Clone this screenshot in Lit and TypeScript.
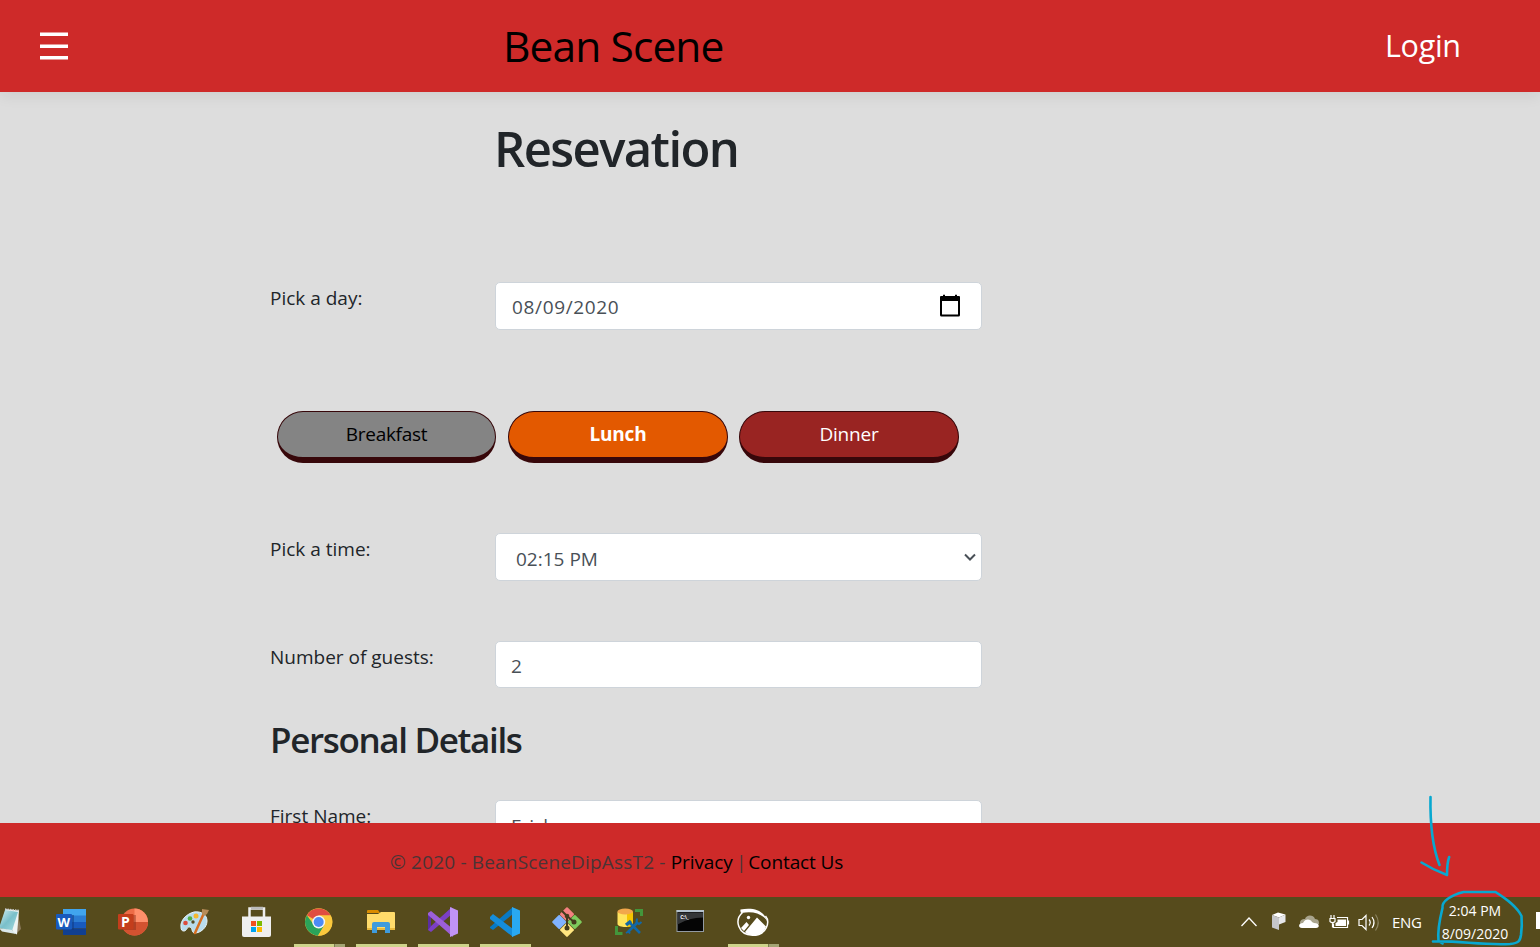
import { LitElement, html, css, svg } from 'lit';
import { customElement } from 'lit/decorators.js';

const glyphs = [
  // Notepad
  svg`<defs><linearGradient id="np" x1="0" y1="0" x2="1" y2="1"><stop offset="0" stop-color="#d8f0f2"/><stop offset=".5" stop-color="#79bfca"/><stop offset="1" stop-color="#a9dbe0"/></linearGradient></defs>
  <path d="M17 12l4 20-5 5z" fill="#8c7a5c"/><path d="M5 12l14 1.500-2 24-4-2z" fill="#edf3f3"/><path d="M5 13l13 2-6 19-13-3z" fill="url(#np)"/><path d="M-1 31l13 2 4 4-14-2.500z" fill="#dce9ea"/><path d="M5 12l14 1.500" stroke="#c7cccc" stroke-width="1.500" stroke-dasharray="1.500 1"/>`,
  // Word
  svg`<path d="M63 12h23v7H63z" fill="#41a5ee"/><path d="M63 18.500h23v6.500H63z" fill="#2b7cd3"/><path d="M63 25h23v6.500H63z" fill="#185abd"/><path d="M63 31.500h23V38H63z" fill="#103f91"/><rect x="62" y="18" width="12" height="15" fill="#10357c" opacity=".5"/><rect x="56" y="17" width="16" height="15.500" rx="1" fill="#185abd"/><text x="63.800" y="29.700" class="letter" font-size="13">W</text>`,
  // PowerPoint
  svg`<circle cx="134.500" cy="25" r="13.500" fill="#ed6c47"/><path d="M134.500 11.500a13.500 13.500 0 0 1 13.500 13.500h-13.500z" fill="#ff8f6b"/><path d="M121 25a13.500 13.500 0 0 0 27 0z" fill="#d35230"/><rect x="122" y="18" width="14" height="15" fill="#7c2817" opacity=".4"/><rect x="118" y="17" width="15.500" height="15.500" rx="1" fill="#c43e1c"/><text x="125.300" y="29.700" class="letter" font-size="14">P</text>`,
  // Paint
  svg`<path d="M181 30c-1-6 5-13 13-15 8-1 13 3 13 9 0 7-7 12-12 12-4 0-2-5-5-6s-3 4-6 4c-2 0-3-1-3-4z" fill="#b8dced" stroke="#e9f6fa"/><circle cx="193" cy="25" r="1.700" fill="#554c22"/><circle cx="185.500" cy="26" r="2.300" fill="#dc4d3d"/><circle cx="190" cy="21.500" r="2.300" fill="#51ae44"/><circle cx="196" cy="19" r="2.500" fill="#f5b82e"/><path d="M204 16l-9 20" stroke="#d76e20" stroke-width="2.500" stroke-linecap="round"/><path d="M202 12l7 1-2 4-3 2-2-2z" fill="#b78c57"/>`,
  // Store
  svg`<path d="M249.500 20v-8.500h14.500V20" fill="none" stroke="#eee" stroke-width="2.500"/><path d="M251 11h12" stroke="#bbb" stroke-width="2.500"/><path d="M242 19.500h29V38q0 2-2 2h-25q-2 0-2-2z" fill="#efefef"/><path d="M251 24h5v5h-5z" fill="#f25022"/><path d="M257 24h5v5h-5z" fill="#7fba00"/><path d="M251 30h5v5h-5z" fill="#00a4ef"/><path d="M257 30h5v5h-5z" fill="#ffb900"/>`,
  // Chrome
  svg`<circle cx="318.700" cy="25" r="13.700" fill="#fbc93d"/><path d="M318.700 25L306.800 18.200A13.700 13.700 0 0 1 330.600 18.500H318.700z" fill="#e04e41"/><path d="M306.800 18.200A13.700 13.700 0 0 0 318 38.700L324.500 28l-5.800-3-6.200 1z" fill="#2ba35a"/><path d="M318.700 18.500h11.900A13.700 13.700 0 0 1 318 38.700L324.500 28z" fill="#fbc93d"/><circle cx="318.700" cy="25" r="6.500" fill="#f4f4f4"/><circle cx="318.700" cy="25" r="5" fill="#4c8bf5"/>`,
  // Explorer
  svg`<path d="M367 14q0-1 1-1h10l2 3h-13z" fill="#d98c00"/><path d="M367 17h11l3-2h13q1 0 1 1v17H367z" fill="#ffdc6b"/><path d="M367 31h28v2h-28z" fill="#e9b93c"/><path d="M372 36V27q0-2 2-2h14q2 0 2 2v9h-5v-6h-8v6z" fill="#3f9bdc"/>`,
  // Visual Studio
  svg`<path d="M428 16l3-1v19l-3-1z" fill="#5b2da0"/><path d="M428 33l3 2 21-18v-7L431 29l-3 4z" fill="#7b3fc4"/><path d="M428 16l3-2 22 18v8L428 18z" fill="#9c5fd8"/><path d="M450 10l8 3.500v23l-8 3.500z" fill="#c193f5"/>`,
  // VS Code
  svg`<path d="M490 30v1l3 2 20-16v-7z" fill="#0879c4"/><path d="M490 20l3-3 20 15v8L490 22z" fill="#158ddb"/><path d="M512 10l8 3.500v23l-8 3.500z" fill="#29a9f2"/>`,
  // Git
  svg`<g transform="rotate(45 567 25)"><rect x="556.300" y="14.300" width="10.500" height="10.500" rx="1" fill="#f48080"/><rect x="567.300" y="14.300" width="10.500" height="10.500" rx="1" fill="#7ecb5d"/><rect x="556.300" y="25.300" width="10.500" height="10.500" rx="1" fill="#80b3ff"/><rect x="567.300" y="25.300" width="10.500" height="10.500" rx="1" fill="#ffe680"/></g><path d="M562 14l5 5v12M567 19l7 6" stroke="#443c1c" stroke-width="2" fill="none"/><circle cx="567" cy="19" r="2.300" fill="#443c1c"/><circle cx="567" cy="31" r="2.500" fill="#443c1c"/><circle cx="574" cy="25" r="2.500" fill="#443c1c"/>`,
  // Database tool
  svg`<path d="M617.500 15v12c0 4 15.500 4 15.500 0V15z" fill="#ffe45c"/><path d="M627 15v15c4-.5 6-1.500 6-3V15z" fill="#f5c400"/><ellipse cx="625.200" cy="14.500" rx="7.800" ry="3" fill="#f2a74b"/><path d="M635 13.500h6.500V19" fill="none" stroke="#43963b" stroke-width="3"/><path d="M616.500 29v7.500h6" fill="none" stroke="#43963b" stroke-width="3"/><path d="M628 35l10-10M629 25l11 11" stroke="#1268a8" stroke-width="2.600"/><path d="M626 28l5-4" stroke="#1268a8" stroke-width="3.500"/><path d="M637 21.500l-.5 4 2.500 1.500 2.500-2M626 36l2.500-1.500 1.500 2" stroke="#1268a8" stroke-width="2" fill="none"/>`,
  // Command prompt
  svg`<rect x="677" y="13.500" width="26.500" height="21" fill="#050505" stroke="#929aa2"/><path d="M677.500 15.500H703v5q-14 0-25.500 7z" fill="#343638"/><path d="M676.500 14h27.500" stroke="#b5c2cd" stroke-width="2"/><text x="684.500" y="21.500" class="letter" font-size="5">C:\\_</text>`,
  // Gallery
  svg`<path d="M742.500 15.500C734 23 738 38 752.500 38.300c15 0 17.500-14 13-19.300" fill="none" stroke="#fff" stroke-width="1.500"/><path d="M740.500 12.500c13-2.500 24 1 27 12-5-8-15-11-26-8.500q-1.500-1-1-3.500z" fill="#fff"/><path d="M741 31l5.500-6 2.500 3-5 6zM745 35l12-14.500 9 9c-3 10-16 11-21 5.500z" fill="#fff"/><circle cx="748.500" cy="20.500" r="1.700" fill="#fff"/>`,
];

const running: Record<number, string> = { 5: 'run multi', 6: 'run', 7: 'run', 8: 'run', 12: 'run multi' };

@customElement('app-root')
export class AppRoot extends LitElement {
  static styles = css`
    :host { display: block; position: relative; width: 1540px; height: 947px; overflow: hidden; font-family: "Open Sans", "Noto Sans", sans-serif; color: #212529; background: #ddd; }
    * { box-sizing: border-box; }
    .page { display: flex; flex-direction: column; height: 947px; }
    header { height: 92px; flex: none; background: #ce2a29; display: flex; align-items: center; box-shadow: 0 4px 14px rgba(0,0,0,.07); }
    .menu { margin: 1px 0 0 39px; width: 30px; height: 30px; }
    .brand { margin: 0 0 0 434px; width: 882px; font-size: 42.5px; line-height: 60px; color: #000; white-space: nowrap; letter-spacing: -.9px; }
    .login { font-size: 30.5px; color: #fff; line-height: 40px; white-space: nowrap; letter-spacing: -.3px; margin-top: -2px; }
    main { height: 731px; flex: none; overflow: hidden; padding-left: 270px; }
    h1 { margin: 25px 0 0 224px; height: 165px; font-size: 49px; line-height: 63px; font-weight: 550; white-space: nowrap; letter-spacing: -1.6px; }
    .row { display: grid; grid-template-columns: 225px 487px; font-size: 19px; }
    .row label { line-height: 32px; white-space: nowrap; }
    .box { height: 48px; background: #fff; border: 1px solid #ced4da; border-radius: 5px; color: #495057; display: flex; align-items: center; justify-content: space-between; padding: 1px 20px 0 16px; }
    .box svg { margin-top: -2px; }
    .day { height: 129px; }
    .day span { letter-spacing: .65px; }
    .meals { display: flex; gap: 11px; margin-left: 7px; height: 122px; }
    .meal { width: 220px; height: 52px; border: 1px solid #37070a; border-bottom-width: 6.500px; border-radius: 26px; background: #992422; color: #fff; font: inherit; font-size: 19px; text-align: center; padding: 0 0 2px; letter-spacing: -.2px; }
    .off { width: 219px; margin-right: 1px; background: #848484; color: #000; letter-spacing: -.3px; }
    .on { background: #e35900; font-weight: 700; }
    .time { height: 108px; }
    .time .box { padding: 3px 4px 0 20px; }
    .time .box svg { margin-top: -1px; }
    .guests { height: 79px; }
    .guests .box { height: 47px; padding: 2px 15px 0; }
    .first .box { padding-left: 15px; padding-top: 3px; }
    h2 { margin: 0; height: 80px; font-size: 35px; line-height: 40px; font-weight: 550; white-space: nowrap; letter-spacing: -1.35px; }
    footer { height: 74px; flex: none; background: #ce2a29; padding: 23px 0 0 390px; font-size: 19px; line-height: 32px; color: #4a3436; white-space: nowrap; }
    footer span { letter-spacing: .18px; }
    footer a { color: #000; letter-spacing: -.1px; }
    footer i { font-style: normal; letter-spacing: -1.6px; }
    .taskbar { height: 50px; flex: none; background: #564b1c; display: flex; overflow: hidden; }
    .apps { display: flex; margin-left: -22px; width: 1250px; flex: none; }
    .app { width: 62px; height: 50px; flex: none; display: flex; flex-direction: column; }
    .app svg { flex: none; }
    .run::after { content: ""; width: 51px; height: 3px; margin: -3px 0 0 6px; background: #ced48b; flex: none; }
    .multi::after { background: linear-gradient(90deg, #ced48b 40px, #7d7c50 40px, #7d7c50 41px, #a4a574 41px); }
    .letter { font-family: "Open Sans", sans-serif; font-weight: 700; fill: #fff; text-anchor: middle; }
    .tray { width: 160px; flex: none; }
    .lang { width: 39px; padding-left: 4px; font-size: 15px; line-height: 51px; color: #fff; flex: none; letter-spacing: -.3px; }
    .clock { width: 94px; flex: none; color: #fff; text-align: center; font-size: 14px; line-height: 23px; padding: 2px 0 0 2px; white-space: nowrap; }
    .note { width: 5px; height: 17px; margin: 15px 0 0 15px; background: #fff; flex: none; }
    .ink { position: absolute; left: 1400px; top: 780px; }
  `;

  render() {
    return html`<div class="page">
      <header>
        <svg class="menu" viewBox="0 0 30 30"><path d="M1 2.300h28M1 14.200h28M1 25.800h28" stroke="#fff" stroke-width="3.400"/></svg>
        <div class="brand">Bean Scene</div>
        <div class="login">Login</div>
      </header>
      <main>
        <h1>Resevation</h1>
        <div class="row day"><label>Pick a day:</label><div class="box"><span>08/09/2020</span>
          <svg width="22" height="24" viewBox="0 0 22 24"><path d="M2 5v16q0 .5.500.500h17q.5 0 .5-.5V5z" fill="none" stroke="#000" stroke-width="2"/><path d="M1 3q0-1 1-1h18q1 0 1 1v4H1zM4 .8h2v3H4zM16 .8h2v3h-2z"/></svg></div></div>
        <div class="meals"><button class="meal off">Breakfast</button><button class="meal on">Lunch</button><button class="meal">Dinner</button></div>
        <div class="row time"><label>Pick a time:</label><div class="box"><span>02:15 PM</span>
          <svg width="14" height="12" viewBox="0 0 14 12"><path d="M2 2.500l5 5 5-5" fill="none" stroke="#495057" stroke-width="2"/></svg></div></div>
        <div class="row guests"><label>Number of guests:</label><div class="box">2</div></div>
        <h2>Personal Details</h2>
        <div class="row first"><label>First Name:</label><div class="box">Erick</div></div>
      </main>
      <footer><span>© 2020 - BeanSceneDipAssT2 - </span><a>Privacy</a><i> | </i><a>Contact Us</a></footer>
      <div class="taskbar">
        <div class="apps">${glyphs.map((g, i) => html`<div class="app ${running[i] ?? ''}"><svg width="62" height="50" viewBox="${i * 62 - 22} 0 62 50">${g}</svg></div>`)}</div>
        <svg class="tray" width="160" height="50" viewBox="1228 0 160 50">
          <path d="M1241.500 29l7.500-8 7.500 8" fill="none" stroke="#fff" stroke-width="1.300"/>
          <path d="M1272 18l6-2.500 7.500 2-6.500 3z" fill="#fff"/><path d="M1272 18l7 2.500V33l-7-2.500z" fill="#c5c6ca"/><path d="M1279 20.500l6.500-3v7.500l-6.500 2.500z" fill="#e6e7ea"/>
          <path d="M1300 26c0-4 4-4 5-4 1-4 8-5 10 0 4 0 4 3 4 5l-6 3h-11z" fill="#a9a48d"/><path d="M1302 31c-4 0-4-5 1-5 2-5 8-4 9-1l2 1c6 0 6 5 2 5z" fill="#fff"/>
          <path d="M1337 20.500h10.500v10h-14v-4M1348.500 23.500v4M1331 18v4M1334 18v4M1330 21.500h5v3q-2.500 2.500-5 0zM1332.500 25v5.500" fill="none" stroke="#fff" stroke-width="1.200"/><path d="M1335.500 26l2-1v-2.500h8.500v6.500h-10.500z" fill="#fff"/>
          <path d="M1359 22.500h3l4-4v14l-4-4h-3z" fill="none" stroke="#fff" stroke-width="1.200"/><path d="M1369 22.500q2.500 3 0 6M1372 20q4 5.500 0 11" fill="none" stroke="#fff" stroke-width="1.200"/><path d="M1375.500 17.500q5.500 8 0 16" fill="none" stroke="#8b8360" stroke-width="1.200"/>
        </svg>
        <div class="lang">ENG</div>
        <div class="clock">2:04 PM<br>8/09/2020</div>
        <div class="note"></div>
      </div>
    </div>
    <svg class="ink" width="140" height="167" viewBox="1400 780 140 167"><g fill="none" stroke="#08a8d0" stroke-width="2.600" stroke-linecap="round" stroke-linejoin="round"><path d="M1430.500 797c-.5 27 2 50 9 68M1421.500 862.500c8 5 16 9 25.500 12.500 0-6 0-12 2.200-18"/><path d="M1433 941.500c25-1 50 4 77 2.500 9-1 10-3 11-9 1-7 1-13 .5-19-5-10-15-17-26-24h-32c-12 3-22 9-21 16-3 12-5 24-4 33l4 2.500"/></g></svg>`;
  }
}
